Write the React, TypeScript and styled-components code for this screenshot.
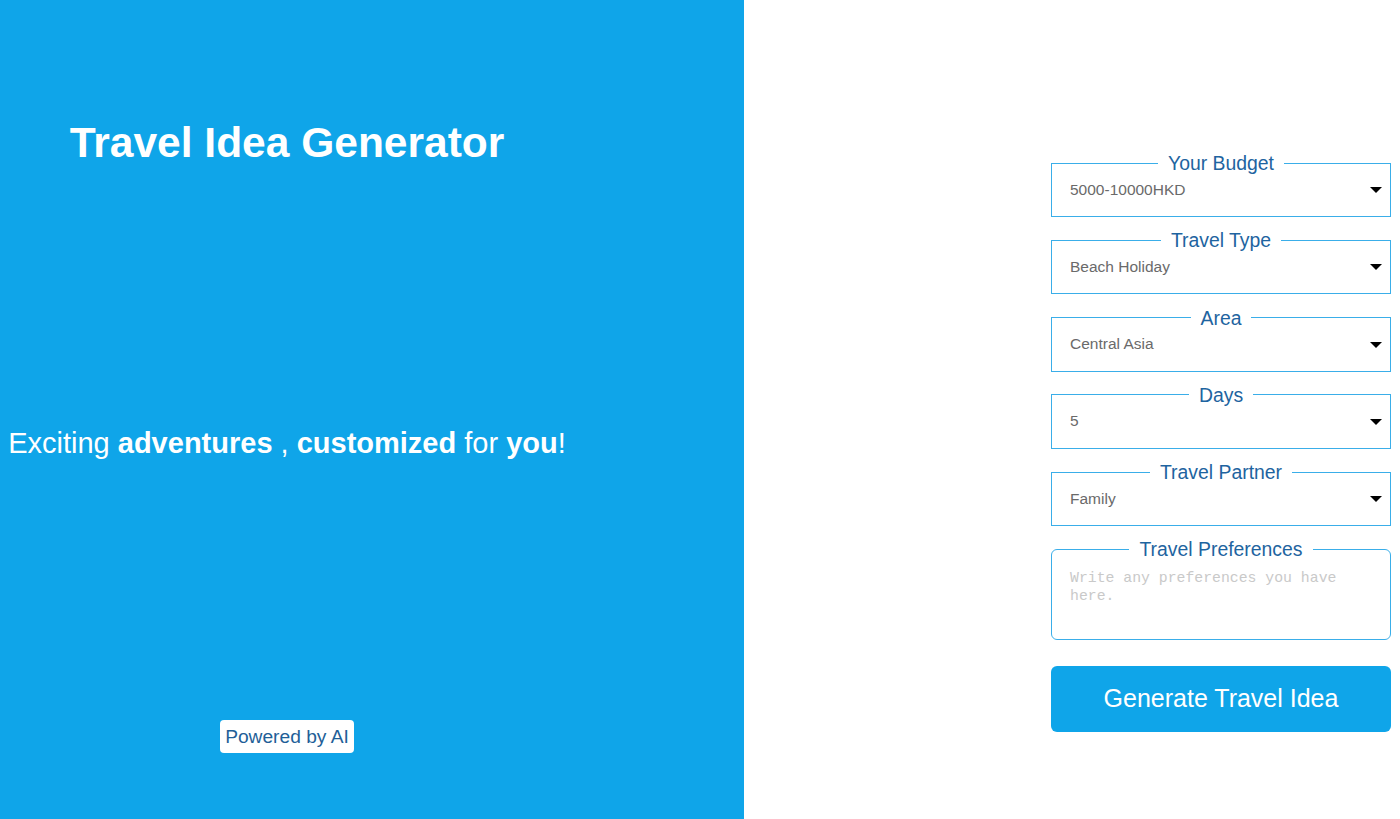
import React, { useState } from 'react';
import styled, { createGlobalStyle } from 'styled-components';

const GlobalStyle = createGlobalStyle`
  html, body {
    margin: 0;
    padding: 0;
    font-family: "Liberation Sans", Arial, sans-serif;
  }
  * {
    box-sizing: border-box;
  }
`;

const selects = [
  { label: 'Your Budget', value: '5000-10000HKD', options: ['0-5000HKD', '5000-10000HKD', '10000-20000HKD'] },
  { label: 'Travel Type', value: 'Beach Holiday', options: ['Beach Holiday', 'City Break', 'Adventure'] },
  { label: 'Area', value: 'Central Asia', options: ['Central Asia', 'East Asia', 'Europe'] },
  { label: 'Days', value: '5', options: ['3', '5', '7', '10'] },
  { label: 'Travel Partner', value: 'Family', options: ['Solo', 'Couple', 'Family', 'Friends'] },
];

const App: React.FC = () => {
  const [values, setValues] = useState<string[]>(selects.map((s) => s.value));
  const [prefs, setPrefs] = useState('');

  return (
    <Page>
      <GlobalStyle />
      {/* 왼쪽 소개 영역 */}
      <Hero>
        <HeroInner>
          <Title>Travel Idea Generator</Title>
          <Tagline>
            Exciting <b>adventures</b> , <b>customized</b> for <b>you</b>!
          </Tagline>
          <Badge>Powered by AI</Badge>
        </HeroInner>
      </Hero>

      {/* 오른쪽 입력 폼 */}
      <FormSide>
        <Form onSubmit={(e) => e.preventDefault()}>
          {selects.map((s, i) => (
            <Field key={s.label}>
              <Legend>{s.label}</Legend>
              <SelectWrap>
                <Select
                  value={values[i]}
                  onChange={(e) => {
                    const next = [...values];
                    next[i] = e.target.value;
                    setValues(next);
                  }}
                >
                  {s.options.map((o) => (
                    <option key={o} value={o}>{o}</option>
                  ))}
                </Select>
              </SelectWrap>
            </Field>
          ))}
          <Field $rounded>
            <Legend>Travel Preferences</Legend>
            <TextArea
              placeholder="Write any preferences you have here."
              value={prefs}
              onChange={(e) => setPrefs(e.target.value)}
            />
          </Field>
          <GenerateButton type="submit">Generate Travel Idea</GenerateButton>
        </Form>
      </FormSide>
    </Page>
  );
};

const Page = styled.div`
  display: flex;
  width: 100%;
  height: 819px;
  background: #ffffff;
`;

const Hero = styled.div`
  width: 744px;
  flex-shrink: 0;
  height: 100%;
  background-color: #0fa5e9;
`;

const HeroInner = styled.div`
  width: 574px;
  height: 100%;
  display: flex;
  flex-direction: column;
  align-items: center;
  text-align: center;
  color: #ffffff;
`;

const Title = styled.h1`
  margin: 119px 0 0;
  font-size: 42.5px;
  line-height: 48px;
  font-weight: 700;
`;

const Tagline = styled.p`
  margin: 259px 0 0;
  font-size: 29px;
  line-height: 34px;
  font-weight: 400;
  white-space: nowrap;

  b {
    font-weight: 700;
  }
`;

const Badge = styled.div`
  margin-top: 260px;
  background: #ffffff;
  color: #1f5f98;
  font-size: 19.2px;
  line-height: 33px;
  height: 33px;
  padding: 0 5px;
  border-radius: 4px;
`;

const FormSide = styled.div`
  flex: 1;
  display: flex;
  justify-content: flex-end;
  padding: 152px 9px 0 0;
`;

const Form = styled.form`
  width: 340px;
  display: flex;
  flex-direction: column;
  gap: 12.25px;
`;

const Field = styled.fieldset<{ $rounded?: boolean }>`
  margin: 0;
  padding: 0 0 ${(p) => (p.$rounded ? '0' : '12px')};
  border: 1px solid #3aaee9;
  border-radius: ${(p) => (p.$rounded ? '6px' : '0')};
  min-width: 0;
`;

const Legend = styled.legend`
  margin: 0 auto;
  padding: 0 10px;
  font-size: 19.4px;
  line-height: 22px;
  color: #1e64a0;
`;

const SelectWrap = styled.div`
  position: relative;

  &::after {
    content: '';
    position: absolute;
    right: 8px;
    top: 13px;
    border-left: 6px solid transparent;
    border-right: 6px solid transparent;
    border-top: 6px solid #000000;
    pointer-events: none;
  }
`;

const Select = styled.select`
  appearance: none;
  -webkit-appearance: none;
  display: block;
  width: 100%;
  height: 30px;
  border: none;
  outline: none;
  background: transparent;
  padding: 0 30px 0 18px;
  font-family: "Liberation Sans", Arial, sans-serif;
  font-size: 15.5px;
  color: #6a6a6a;
`;

const TextArea = styled.textarea`
  display: block;
  width: 100%;
  height: 79px;
  border: none;
  outline: none;
  resize: none;
  background: transparent;
  padding: 9px 18px;
  font-family: "Liberation Mono", "Courier New", monospace;
  font-size: 14.8px;
  line-height: 18px;
  color: #333333;
  border-radius: 6px;

  &::placeholder {
    color: #c9c9c9;
  }
`;

const GenerateButton = styled.button`
  margin-top: 13px;
  width: 100%;
  height: 66px;
  flex-shrink: 0;
  border: none;
  border-radius: 6px;
  background-color: #0fa5e9;
  color: #ffffff;
  font-family: "Liberation Sans", Arial, sans-serif;
  font-size: 25px;
  cursor: pointer;
`;

export default App;
